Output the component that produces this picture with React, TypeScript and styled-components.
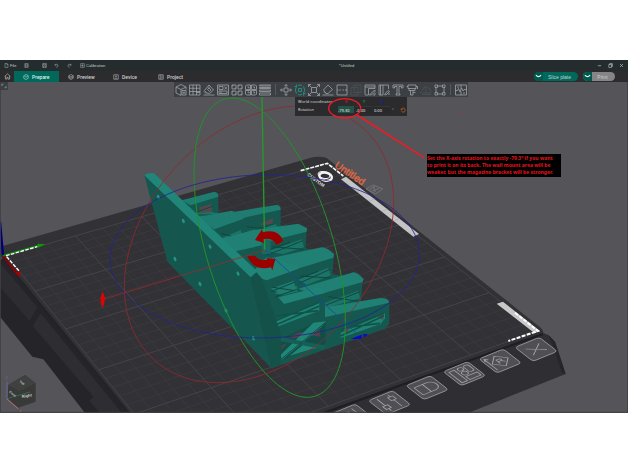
import React from "react";
import styled, { createGlobalStyle } from "styled-components";

const GlobalStyle = createGlobalStyle`
  * { box-sizing: border-box; }
  body { margin: 0; background: #fff; font-family: "Liberation Sans", Arial, sans-serif; }
  button, input { font: inherit; color: inherit; border: 0; padding: 0; margin: 0; background: none; }
`;

const Page = styled.main`
  padding: 60px 0;
`;

const AppWindow = styled.section`
  background: #545359;
`;

const TitleBar = styled.header`
  display: grid;
  grid-template-columns: 54% 1fr auto;
  align-items: center;
  height: 11px;
  background: #242c2e;
  color: #c9cccc;
  font-size: 4px;
`;

const MenuGroup = styled.div`
  display: flex;
  align-items: center;
  padding-left: 4px;
`;

const MenuButton = styled.button<{ $width: number }>`
  display: flex;
  align-items: center;
  gap: 1px;
  width: ${(p) => p.$width}px;
  white-space: nowrap;
`;

const Title = styled.h1`
  margin: 0;
  font-size: 4px;
  font-weight: 400;
`;

const WindowControls = styled.div`
  display: flex;
  gap: 6px;
  padding-right: 4px;
`;

const PlainButton = styled.button`
  display: flex;
`;

const TabBar = styled.nav`
  display: flex;
  align-items: center;
  height: 11px;
  background: #2c2c2f;
  color: #c8c8c8;
  font-size: 5px;
`;

const HomeButton = styled.button`
  display: flex;
  justify-content: center;
  width: 14px;
`;

const Tab = styled.button<{ $active?: boolean }>`
  display: flex;
  align-items: center;
  gap: 3px;
  width: 45px;
  height: 11px;
  padding-left: 9px;
  font-family: Roboto, sans-serif;
  font-weight: 500;
  color: ${(p) => (p.$active ? "#d9f2ed" : "#cdcdce")};
  background: ${(p) => (p.$active ? "#00695c" : "transparent")};
`;

const Actions = styled.div`
  display: flex;
  gap: 5px;
  margin-left: auto;
  padding-right: 13px;
`;

const SplitButton = styled.div<{ $width: number; $fill: string }>`
  display: flex;
  width: ${(p) => p.$width}px;
  height: 9px;
  border-radius: 5px;
  overflow: hidden;
  background: ${(p) => p.$fill};
`;

const SplitArrow = styled.button`
  display: flex;
  align-items: center;
  justify-content: center;
  width: 9px;
  background: #00594e;
`;

const SplitLabel = styled.button`
  flex: 1;
  padding-right: 2px;
  text-align: center;
  color: #c3d2cf;
`;

const Viewport = styled.div`
  position: relative;
`;

const Canvas = styled.svg`
  display: block;
  width: 100%;
  height: auto;
`;

const Markup = styled(Canvas)`
  position: absolute;
  top: 0;
  left: 0;
  pointer-events: none;
`;

const SidebarToggle = styled.button`
  position: absolute;
  top: 0;
  left: 0;
  display: flex;
  align-items: center;
  justify-content: center;
  width: 8px;
  height: 8px;
  background: #3d4043;
`;

const Toolbar = styled.div`
  position: absolute;
  top: 0;
  left: calc(50% - 140px);
  display: flex;
  align-items: center;
  gap: 2px;
  height: 15px;
  padding: 0 1px;
  background: #3c4044;
`;

const ToolButton = styled.button<{ $tone?: "active" | "dim" }>`
  display: flex;
  width: 12px;
  height: 12px;
  color: ${(p) => (p.$tone === "active" ? "#16a08e" : p.$tone === "dim" ? "#4a5055" : "#a0a2a4")};
`;

const Separator = styled.span`
  width: 1px;
  height: 11px;
  margin: 0 2px;
  background: #56595c;
`;

const RotationPanel = styled.form`
  position: absolute;
  top: 15px;
  left: calc(50% - 19px);
  display: grid;
  grid-template-columns: 38px 16px 16px 16px 6px 1fr;
  column-gap: 2px;
  align-items: center;
  width: 112px;
  height: 19px;
  padding: 1px 0 2px 3px;
  background: #2b2b2e;
  color: #d8d8d8;
  font: 4px "Noto Sans", sans-serif;
`;

const PanelLabel = styled.span`
  white-space: nowrap;
`;

const AxisLabel = styled.label<{ $color: string }>`
  text-align: center;
  font-weight: 700;
  color: ${(p) => p.$color};
`;

const AngleInput = styled.input<{ $focused?: boolean }>`
  width: 100%;
  height: 7px;
  color: #e6e6e6;
  border-top: 1px solid ${(p) => (p.$focused ? "#235346" : "#353538")};
  background: ${(p) => (p.$focused ? "#235346" : "#29292b")};
`;

const Callout = styled.p`
  position: absolute;
  top: 72px;
  left: 68%;
  width: 134px;
  margin: 0;
  padding: 1px 0;
  background: #000;
  color: #e5141c;
  font: 700 5px/7px "Noto Sans", sans-serif;
  white-space: nowrap;
`;

const CalloutLine = styled.span`
  display: block;
`;

/* ---------- icons ---------- */

type IconProps = { d: string; size?: number; width?: number; color?: string };

const Icon = ({ d, size = 12, width = 1.5, color = "currentColor" }: IconProps) => (
  <svg width={size} height={size} viewBox="0 0 24 24" fill="none" stroke={color} strokeWidth={width} aria-hidden="true">
    <path d={d} />
  </svg>
);

const shapes = {
  file: "M5 2h9l5 5v15H5zM14 2v6h5",
  list: "M4 3h16v18H4zM8 3v18M12 8h6M12 12h6M12 16h6",
  save: "M3 3h18v18H3zM7 3v6h10V3M7 21v-7h10v7",
  undo: "M5 4v7h7M5 11c3-7 14-7 14 2 0 5-4 8-9 8",
  redo: "M19 4v7h-7M19 11C16 4 5 4 5 13c0 5 4 8 9 8",
  calib: "M3 3h18v18H3zM12 6v12M6 12h12",
  minimize: "M4 13h16",
  restore: "M4 7h13v14H4zM8 7V3h13v13h-4",
  close: "M5 5l14 14M19 5L5 19",
  home: "M2 12L12 3l10 9M5 10v11h5v-6h4v6h5V10",
  cube: "M12 2l9 5v10l-9 5-9-5V7zM6 9l6 4 8-6",
  layers: "M12 2l9 5-9 5-9-5zM3 7v10l9 5 9-5V7M3 12l9 5 9-5",
  device: "M3 3h18v18H3zM7 17h10M12 6v7M9 9h6",
  project: "M3 3h18v18H3zM9 3v18M13 8h5M13 12h5M13 16h5",
  chevron: "M3 7q9 11 18 0",
  swap: "M3 12V5h7M3 5l5 4M21 12v7h-7M21 19l-5-4",
  reset: "M5 6v5h5M5 11a8 8 0 1 1 1 6",
};

const tools: { label: string; d?: string; tone?: "active" | "dim" }[] = [
  { label: "Add", d: "M12 23L2 18V6l10-5 10 5v5M2 6l10 5 10-5M12 11v12M14 13h8v9h-8zM16 17.500h4M18 15.500v4" },
  { label: "Add plate", d: "M1 2h21v20H1zM8 2v20M15 2v20M1 8.500h21M1 15h21M15 17h7" },
  { label: "Auto orient", d: "M3 13L12 2l9 10-8 7-6-1zM9 11l3-3 4 4-3 3zM1 22h22M2 15l4 4M12 5v3" },
  { label: "Arrange", d: "M1 2h22v20H1zM4 5h8v6H4zM15 5l5 6M15 11l5-6M4 14h16v5H4zM8 14v5" },
  { label: "Split to objects", d: "M2 2h8v8H2zM14 2h8v8h-8zM2 14h8v8H2zM14 14h8v8h-8zM2 5l3-3M7 10l3-3M14 5l3-3M19 10l3-3M2 17l3-3M7 22l3-3M14 17l3-3M19 22l3-3" },
  { label: "Split to parts", d: "M3 2h8v9H1V4zM13 2h8l2 2v7H13zM1 13h10v9H3l-2-2zM13 13h10v7l-2 2h-8zM5 6h3v3M16 6h3v3M5 16h3v3M16 16h3v3" },
  { label: "Variable layer height", d: "M1 2h22v2H1zM1 7h22v2H1zM1 12h22v3H1zM1 18h22v4H1z" },
  { label: "|" },
  { label: "Move", d: "M8 8h8v8H8zM12 7V1M9 4l3-3 3 3M12 17v6M9 20l3 3 3-3M7 12H1M4 9l-3 3 3 3M17 12h6M20 9l3 3-3 3" },
  { label: "Rotate", d: "M9 9h6v6H9zM8 3q4-2 8 0M19 5q5 7 0 14M16 21q-4 2-8 0M5 19Q0 12 5 5M5 1v4H1M19 23v-4h4", tone: "active" },
  { label: "Scale", d: "M7 7h10v10H7zM7 7L1 1M1 6V1h5M17 7l6-6M18 1h5v5M7 17l-6 6M1 18v5h5M17 17l6 6M23 18v5h-5" },
  { label: "Lay on face", d: "M3 12L12 2l9 9-9 8H8zM1 22h22M4 15l4 4" },
  { label: "Cut", d: "M2 2h20v20H2zM2 12h3M7 12h3M13 12h3M18 12h4" },
  { label: "Mesh boolean", d: "M2 7h14v15H2zM8 2h14v15H8z", tone: "dim" },
  { label: "Support painting", d: "M2 21V2h20v7H9v13H2M2 6h20M12 21l9-9 2 2-8 8h-4zM22 18v4h-4" },
  { label: "Seam painting", d: "M2 2h8v20H2zM10 2h11v8M5 2v20M13 21l7-8 3 2-7 7zM22 18v4" },
  { label: "Text", d: "M2 2h20v6h-3V5h-5v15h2v2H8v-2h2V5H5v3H2z" },
  { label: "Color painting", d: "M4 2h16v7H4zM4 5H1M20 5h3v5M6 9v4h12V9M9 13v9h5v-9M14 17h5" },
  { label: "Simplify", d: "M2 15l8-10 10 5 2 8H2zM4 21h18M10 5l3 13", tone: "dim" },
  { label: "Measure", d: "M2 2h5v5H2zM17 2h5v5h-5zM2 17h5v5H2zM17 17h5v5h-5zM7 4h10M7 20h10M4 7v10M20 7v10" },
  { label: "|" },
  { label: "Assembly view", d: "M1 2h22v20H1zM12 2v7M12 15v7M1 13h4l2-4 3 7 3-8 3 6 2-3h5M4 6h4M16 18h4" },
];

/* ---------- scene geometry, in thirds of a pixel ---------- */

type Pt = [number, number];

const plate: Pt[] = [[20, 767], [982, 490], [1612, 993], [519, 1386]];

function projector([p0, p1, p2, p3]: Pt[]) {
  const dx1 = p1[0] - p2[0], dx2 = p3[0] - p2[0], dx3 = p0[0] - p1[0] + p2[0] - p3[0];
  const dy1 = p1[1] - p2[1], dy2 = p3[1] - p2[1], dy3 = p0[1] - p1[1] + p2[1] - p3[1];
  const det = dx1 * dy2 - dx2 * dy1;
  const g = (dx3 * dy2 - dx2 * dy3) / det;
  const h = (dx1 * dy3 - dx3 * dy1) / det;
  const a = p1[0] - p0[0] + g * p1[0], b = p3[0] - p0[0] + h * p3[0];
  const d = p1[1] - p0[1] + g * p1[1], e = p3[1] - p0[1] + h * p3[1];
  return (u: number, v: number) => {
    const w = g * u + h * v + 1;
    return `${(a * u + b * v + p0[0]) / w} ${(d * u + e * v + p0[1]) / w}`;
  };
}

const project = projector(plate);
const CELLS = 25;
const gridPath = (bold: boolean) =>
  Array.from({ length: CELLS + 1 }, (_, i) => i)
    .filter((i) => (i % 5 === 0) === bold)
    .map((i) => {
      const t = i / CELLS;
      return `M${project(t, 0)}L${project(t, 1)}M${project(0, t)}L${project(1, t)}`;
    })
    .join("");

const ring = (cx: number, cy: number, w: number, h: number, dy: number) => {
  const phase = Math.asin(dy / h);
  return Array.from({ length: 120 }, (_, i) => {
    const t = (i * Math.PI) / 60;
    return `${i ? "L" : "M"}${(cx + w * Math.cos(t)).toFixed(1)} ${(cy + h * Math.sin(t + phase)).toFixed(1)}`;
  }).join("") + "Z";
};

const plateButtons = [
  { x: 1545, y: 1042, d: "M22 28L78 72M78 28L22 72" },
  { x: 1437, y: 1077, d: "M12 12v76M6 26l6-14 10 10M50 16l32 34-32 34-32-34zM42 62V38h12q10 6 0 12H42M54 50l10 12" },
  { x: 1330, y: 1115, d: "M12 14h22v74H12zM44 22a10 10 0 1 1 20 0 10 10 0 1 1-20 0M42 48a11 11 0 1 1 22 0 11 11 0 1 1-22 0M72 12h10q8 0 8 8v24q0 8-8 8h-4q-8 0-8-8V14M44 66h46v22H44z" },
  { x: 1218, y: 1157, d: "M14 26h34v50H14zM48 26h20q20 4 20 25t-20 25H48" },
  { x: 1105, y: 1202, d: "M28 10v46M28 76v14M18 56h20v20H18zM72 10v14M72 44v46M62 24h20v20H62z" },
  { x: 993, y: 1242, d: "M24 80V24h30v56M74 14v60" },
];

const Scene = () => (
  <Canvas viewBox="0 246 1884 993" role="img" aria-label="Model on the build plate">
    <rect x="0" y="246" width="1884" height="993" fill="#555459" />
    {/* printer base */}
    <path d="M0 780L20 770 400 1239H255L130 1078 97 1070 0 950Z" fill="#252429" />
    <path d="M0 790L112 922 88 962 0 862Z" fill="#2d2c31" />
    <path d="M122 940L365 1239H300L268 1203 280 1190 98 978Z" fill="#2e2d32" />
    <path d="M960 1239L1632 1000 1645 1005 1665 1025 1697 1122 1405 1239Z" fill="#2f2e33" />
    <path d="M1645 1005L1665 1025 1697 1122 1686 1118 1660 1040Z" fill="#26252a" />
    {/* bed */}
    <path d="M0 740L930 474Q955 466 980 474L1622 983Q1634 993 1628 1006L975 1239H384L0 768Z" fill="#323136" />
    <path d="M1629 1002L970 1239" stroke="#1f1e22" strokeWidth="7" />
    <path d="M8 775L392 1246" stroke="#242328" strokeWidth="7" />
    <path d={gridPath(false)} stroke="#3e3d41" strokeWidth="2" fill="none" />
    <path d={gridPath(true)} stroke="#48474c" strokeWidth="2.500" fill="none" />
    {/* plate marks */}
    <path d="M902 512L982 490 1030 528" stroke="#f2f2f2" strokeWidth="5" strokeDasharray="12 3" fill="none" />
    <path d="M1023 538L1038 530 1257 702 1240 710Z" fill="#c4c4c6" />
    <path d="M1070 575l16-7M1108 604l16-7M1146 634l16-7M1182 663l16-7" stroke="#aaaaad" strokeWidth="2" />
    <path d="M1490 911L1509 905 1620 993 1604 1000Z" fill="#c8c8c9" />
    <path d="M1545 938L1614 993 1525 1023" stroke="#fff" strokeWidth="6" strokeDasharray="12 4" fill="none" />
    <ellipse cx="977" cy="530" rx="19" ry="12" fill="none" stroke="#f4f4f4" strokeWidth="7" transform="rotate(12 977 530)" />
    <ellipse cx="972" cy="525" rx="18" ry="10" fill="none" stroke="#f4f4f4" strokeWidth="3" transform="rotate(12 972 525)" />
    <text x="921" y="526" transform="rotate(37 921 526)" fill="#ddd" fontSize="14" fontWeight="700">CUSTOM</text>
    <text x="1002" y="500" transform="rotate(34 1002 500)" fill="#e4693f" fontSize="30" stroke="#e4693f" strokeWidth="1">Untitled</text>
    <path d="M1098 567l22-12 28 12-22 15zM1108 569l17-9M1114 574l24-9M1120 559l6 17" stroke="#828187" strokeWidth="2" fill="none" />
    {/* origin axes */}
    <path d="M0 665L9 765" stroke="#00007d" strokeWidth="7" />
    <path d="M10 767L120 735" stroke="#0c8a0c" strokeWidth="5" />
    <path d="M112 731l24 2-22 10z" fill="#0c9a0c" />
    <path d="M18 767L112 740M20 770L58 814" stroke="#fff" strokeWidth="4" strokeDasharray="11 4" />
    <path d="M10 770L52 822" stroke="#8a0000" strokeWidth="6" />
    <path d="M46 818l14-6 2 19z" fill="#a00" />
    {/* rack body */}
    <path d="M545 600L655 585 655 640 715 635 842 622 842 676 920 687 917 745 1002 765 997 822 1088 838 1083 905 1168 906V972L1155 986 815 1105 752 830Z" fill="#14584f" />
    <path d="M600 622L636 612V640L596 642ZM790 666L820 655 818 672 780 676Z" fill="#55484d" />
    {/* far arm */}
    <path d="M545 601L640 576Q655 574 655 590L572 616Z" fill="#1e7c70" />
    <path d="M588 640l50-4 16 5v10l-60 6z" fill="#1c7468" />
    <path d="M590 636l50-18M590 645h60" stroke="#0f473f" strokeWidth="3" />
    {/* second arm */}
    <path d="M700 636L828 615Q842 614 842 629L732 653Z" fill="#1e7c70" />
    <path d="M588 652L695 632 733 646 731 656 643 688Z" fill="#1e7c70" />
    <path d="M660 716L722 690 728 712 690 724ZM740 694L825 672 835 682 770 698Z" fill="#1c7468" />
    <path d="M664 700l60 18M735 700l86-28M740 680l70 8" stroke="#0f473f" strokeWidth="3" />
    {/* third arm */}
    <path d="M665 716L760 690 895 671 921 685 920 695 800 725 790 735 700 755Z" fill="#1f8073" />
    <path d="M800 755L905 718 912 742 850 762Z" fill="#1c7468" />
    <path d="M802 765L908 722M815 740l95 8M800 752l70-26" stroke="#0f473f" strokeWidth="3" />
    <path d="M785 722Q800 714 812 722V762H785Z" fill="#186a60" />
    {/* fourth arm */}
    <path d="M775 782L965 742Q978 740 1002 762L1000 773 898 805 830 790Z" fill="#1f8073" />
    <path d="M752 822L800 772 898 798 896 806 800 841 785 836Z" fill="#208376" />
    <path d="M895 838L985 803 992 826 920 855Z" fill="#1c7468" />
    <path d="M897 850L990 808M902 828l90 6M895 836l60-22" stroke="#0f473f" strokeWidth="3" />
    <path d="M812 866L882 842 886 862 840 880ZM822 880L890 858 893 874 850 886Z" fill="#1e7c70" />
    <path d="M818 862l66 10M815 874l70-28M826 890l66-22" stroke="#0f473f" strokeWidth="3" />
    {/* fifth arm */}
    <path d="M895 866L1060 817Q1072 816 1091 838L1088 846 970 880 930 880Z" fill="#1f8073" />
    <path d="M835 892L955 862 974 868 972 880 852 912Z" fill="#208376" />
    <path d="M975 908L1075 872 1080 895 975 925Z" fill="#1c7468" />
    <path d="M978 915L1078 876M985 890l90 14" stroke="#0f473f" strokeWidth="3" />
    {/* near arm */}
    <path d="M975 922L1140 894Q1166 893 1168 908L975 952Z" fill="#1f8073" />
    <path d="M1022 998L1155 940 1155 955 1142 972 1022 1014Z" fill="#1e8375" />
    <path d="M1134 950L1151 941 1150 960ZM1030 990L1050 982 1040 1000Z" fill="#55484d" />
    <path d="M1022 1008L1152 947M1035 983L1140 970M1022 990l130-50" stroke="#12524a" strokeWidth="5" />
    {/* front lattice */}
    <path d="M820 962L958 906V932L822 984Z" fill="#1e8375" />
    <path d="M820 978L958 918M830 948L955 932M820 965l138-58" stroke="#12524a" strokeWidth="5" />
    <path d="M842 1018L932 974 976 965V1032L842 1080Z" fill="#124d47" />
    <path d="M863 1012L900 996 918 1000 890 1015ZM925 1005L958 990 962 1010ZM845 1036L860 1030 845 1050Z" fill="#514349" />
    <path d="M842 1064L940 968 978 964 965 980 845 1080ZM868 1068L915 1030 975 1040 935 1047Z" fill="#1f8678" />
    <path d="M842 1018L972 1042" stroke="#165f56" strokeWidth="12" />
    <path d="M843 1078L978 966" stroke="#125047" strokeWidth="3" />
    {/* back plate */}
    <path d="M433 526L752 830 815 1105 502 785Z" fill="#15574f" />
    <path d="M752 830L815 1105 842 1094 842 1000 785 835 768 815Z" fill="#135149" />
    <path d="M433 526Q445 517 462 520L772 814 752 832Z" fill="#20867a" />
    {[[475, 591], [550, 663], [630, 740], [714, 821], [525, 777], [600, 852], [678, 932], [760, 1015]].map(([x, y]) => (
      <ellipse key={x} cx={x} cy={y} rx="4" ry="7" fill="#259385" transform={`rotate(-20 ${x} ${y})`} />
    ))}
    {/* rotation rings and axes */}
    <g fill="none" strokeWidth="2.500">
      <path d={ring(777, 733, 404, 415, -127)} stroke="#8e2a2e" />
      <path d={ring(809, 743, 227, 449, 223)} stroke="#23912b" strokeWidth="3" />
      <path d={ring(794, 769, 464, 245, -7)} stroke="#23238f" />
      <path d="M786 290L794 750" stroke="#239a2b" strokeWidth="4" />
      <path d="M795 750L310 898" stroke="#962a2c" />
      <path d="M795 750L1070 1000" stroke="#0c4fa4" />
    </g>
    <path d="M308 874l8 22-3 6 1 4-6 19-7-20 2-6-3-3z" fill="#d90606" />
    <path d="M1052 1017l22-9 5 9zM1074 1008l12-4-2 12-10 1zM1088 1003l16-1-11 10z" fill="#0808cf" />
    <path d="M765 720L786 688 788 697Q835 684 850 723L829 735Q818 711 790 718L792 729Z" fill="#9a0000" />
    <path d="M742 769L765 767Q775 783 801 779L800 774 826 777 817 811 813 802Q762 815 742 769Z" fill="#9a0000" />
    {/* plate buttons */}
    {plateButtons.map(({ x, y, d }) => (
      <g key={x} transform={`matrix(.73 -.3 .54 .42 ${x} ${y})`} fill="none" stroke="#a4a3a7" strokeWidth="3">
        <rect x="0" y="0" width="100" height="100" rx="12" fill="#504f54" />
        <path d={d} strokeWidth="3.500" />
      </g>
    ))}
    {/* orientation cube */}
    <path d="M25 1155L75 1125 107 1150V1205L55 1223 22 1195Z" fill="#373a39" />
    <path d="M25 1155L75 1125 107 1150 58 1174Z" fill="#3e4140" />
    <path d="M21 1145V1197" stroke="#68699c" strokeWidth="3" />
    <path d="M21 1197L54 1226" stroke="#b66d68" strokeWidth="3" />
    <path d="M24 1195L90 1176" stroke="#3d664a" strokeWidth="3" />
    <g fill="#c8caca" fontSize="12" fontWeight="700">
      <text x="66" y="1194" transform="rotate(-10 66 1194)">Right</text>
      <text x="27" y="1177" fontSize="9" transform="rotate(38 27 1177)">Front</text>
      <text x="58" y="1146" fontSize="9" transform="rotate(35 58 1146)">Top</text>
    </g>
    <text x="17" y="1136" fill="#6d6db5" fontSize="10">Z</text>
    <text x="58" y="1238" fill="#bc6c66" fontSize="10">X</text>
    <path d="M1 246V1237H1883V246" fill="none" stroke="#403f44" strokeWidth="3" />
  </Canvas>
);

const axes = [
  { axis: "X", color: "#c01820", value: "-79.30" },
  { axis: "Y", color: "#168a2c", value: "-0.00" },
  { axis: "Z", color: "#1616d8", value: "0.00" },
];

export default function App() {
  return (
    <Page>
      <GlobalStyle />
      <AppWindow>
        <TitleBar>
          <MenuGroup>
            <MenuButton $width={20}><Icon d={shapes.file} size={5} width={2} />File</MenuButton>
            <MenuButton $width={18} aria-label="Menu"><Icon d={shapes.list} size={5} width={2} /></MenuButton>
            <MenuButton $width={12} aria-label="Save"><Icon d={shapes.save} size={5} width={2} /></MenuButton>
            <MenuButton $width={13} aria-label="Undo"><Icon d={shapes.undo} size={5} width={2} /></MenuButton>
            <MenuButton $width={13} aria-label="Redo"><Icon d={shapes.redo} size={5} width={2} /></MenuButton>
            <MenuButton $width={26}><Icon d={shapes.calib} size={5} width={2} />Calibration</MenuButton>
          </MenuGroup>
          <Title>*Untitled</Title>
          <WindowControls>
            <PlainButton aria-label="Minimize"><Icon d={shapes.minimize} size={5} width={3} /></PlainButton>
            <PlainButton aria-label="Restore"><Icon d={shapes.restore} size={5} width={3} /></PlainButton>
            <PlainButton aria-label="Close"><Icon d={shapes.close} size={5} width={3} /></PlainButton>
          </WindowControls>
        </TitleBar>
        <TabBar>
          <HomeButton aria-label="Home"><Icon d={shapes.home} size={7} width={2} /></HomeButton>
          <Tab $active><Icon d={shapes.cube} size={6} width={2} />Prepare</Tab>
          <Tab><Icon d={shapes.layers} size={6} width={2} />Preview</Tab>
          <Tab><Icon d={shapes.device} size={6} width={2} />Device</Tab>
          <Tab><Icon d={shapes.project} size={6} width={2} />Project</Tab>
          <Actions>
            <SplitButton $width={44} $fill="#00695c">
              <SplitArrow aria-label="Slice options"><Icon d={shapes.chevron} size={7} width={4} color="#e8f4f2" /></SplitArrow>
              <SplitLabel>Slice plate</SplitLabel>
            </SplitButton>
            <SplitButton $width={32} $fill="#858585">
              <SplitArrow aria-label="Print options"><Icon d={shapes.chevron} size={7} width={4} color="#e8f4f2" /></SplitArrow>
              <SplitLabel>Print</SplitLabel>
            </SplitButton>
          </Actions>
        </TabBar>
        <Viewport>
          <Scene />
          <SidebarToggle aria-label="Toggle sidebar"><Icon d={shapes.swap} size={6} width={2} color="#a0a2a4" /></SidebarToggle>
          <Toolbar role="toolbar" aria-label="Object tools">
            {tools.map((tool, i) =>
              tool.d ? (
                <ToolButton key={tool.label} $tone={tool.tone} aria-label={tool.label}>
                  <Icon d={tool.d} width={1.6} />
                </ToolButton>
              ) : (
                <Separator key={i} />
              )
            )}
          </Toolbar>
          <RotationPanel>
            <PanelLabel>World coordinates</PanelLabel>
            {axes.map((a) => (
              <AxisLabel key={a.axis} $color={a.color} htmlFor={`angle-${a.axis}`}>{a.axis}</AxisLabel>
            ))}
            <span />
            <span />
            <PanelLabel>Rotation</PanelLabel>
            {axes.map((a) => (
              <AngleInput key={a.axis} id={`angle-${a.axis}`} defaultValue={a.value} $focused={a.axis === "X"} />
            ))}
            <PanelLabel>°</PanelLabel>
            <PlainButton type="button" aria-label="Reset rotation"><Icon d={shapes.reset} size={6} width={3} color="#c4621e" /></PlainButton>
          </RotationPanel>
          <Callout>
            <CalloutLine>Set the X-axis rotation to exactly -79.3° if you want</CalloutLine>
            <CalloutLine>to print it on its back. The wall mount area will be</CalloutLine>
            <CalloutLine>weaker, but the magazine bracket will be stronger.</CalloutLine>
          </Callout>
          <Markup viewBox="0 246 1884 993" fill="none" stroke="#ed1c24" aria-hidden="true">
            <ellipse cx="1034" cy="325" rx="48" ry="29" strokeWidth="4" />
            <path d="M1071 345L1272 473" strokeWidth="5" />
            <circle cx="1379" cy="338" r="2" fill="#ed1c24" stroke="none" />
          </Markup>
        </Viewport>
      </AppWindow>
    </Page>
  );
}
